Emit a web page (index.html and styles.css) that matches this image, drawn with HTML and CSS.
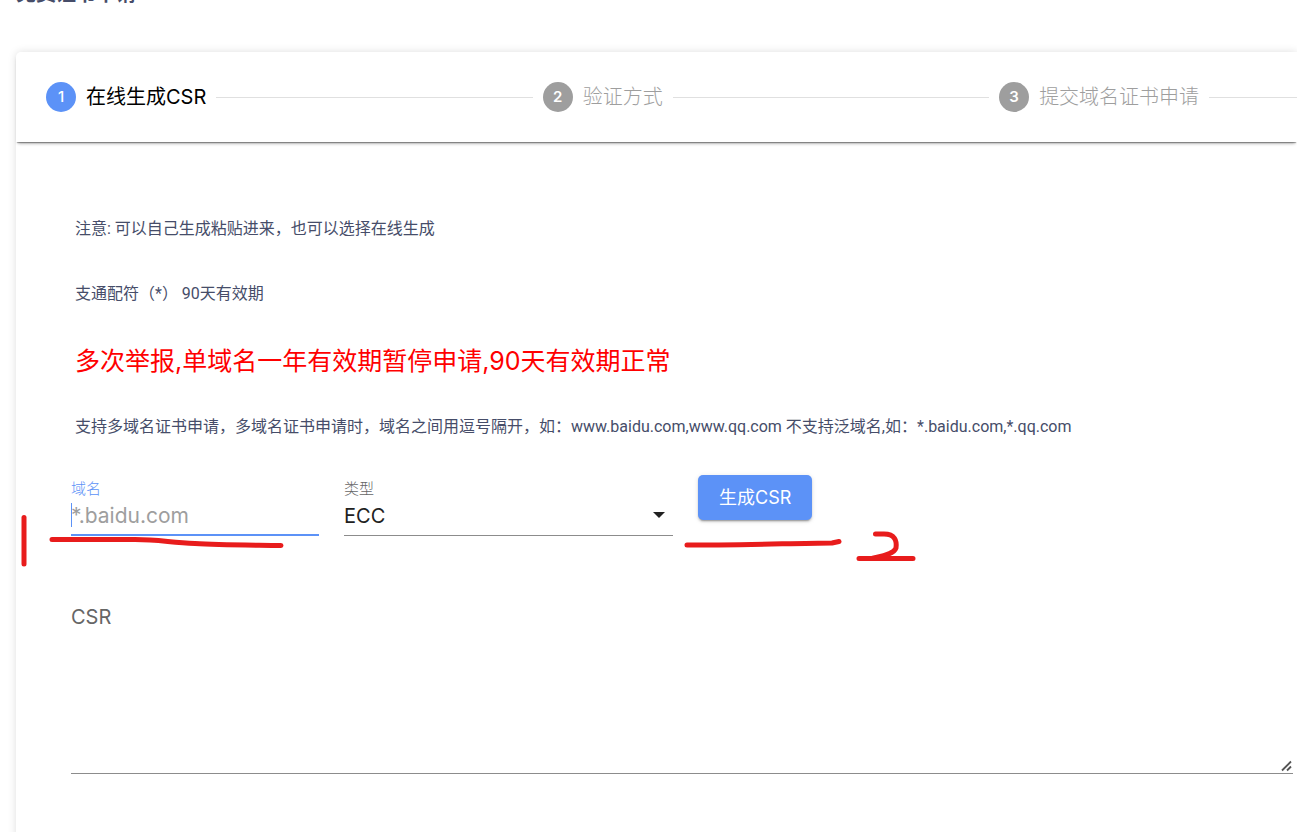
FILE: index.html
```html
<!DOCTYPE html>
<html lang="zh-CN">
<head>
<meta charset="utf-8">
<title>免费证书申请</title>
<link rel="stylesheet" href="styles.css">
</head>
<body>
<main class="page">
  <h1 class="page-title">免费证书申请</h1>
  <section class="card">
    <ol class="stepper">
      <li class="step step-active"><span class="step-num">1</span><span class="step-label">在线生成CSR</span></li>
      <li class="step-line" aria-hidden="true"></li>
      <li class="step"><span class="step-num">2</span><span class="step-label">验证方式</span></li>
      <li class="step-line" aria-hidden="true"></li>
      <li class="step"><span class="step-num">3</span><span class="step-label">提交域名证书申请</span></li>
      <li class="step-line step-line-last" aria-hidden="true"></li>
    </ol>
    <div class="card-body">
      <div class="notes">
        <p class="note">注意: 可以自己生成粘贴进来，也可以选择在线生成</p>
        <p class="note">支通配符（*） 90天有效期</p>
        <p class="warning">多次举报,单域名一年有效期暂停申请,90天有效期正常</p>
        <p class="note">支持多域名证书申请，多域名证书申请时，域名之间用逗号隔开，如：www.baidu.com,www.qq.com 不支持泛域名,如：*.baidu.com,*.qq.com</p>
      </div>
      <form class="form">
        <div class="form-row">
          <div class="field field-focused">
            <label class="field-label" for="domain">域名</label>
            <div class="control">
              <input class="input" id="domain" type="text" placeholder="*.baidu.com">
              <span class="caret"></span>
            </div>
          </div>
          <div class="field">
            <label class="field-label" for="type">类型</label>
            <div class="control">
              <select class="input select" id="type"><option>ECC</option><option>RSA</option></select>
              <svg class="arrow" viewBox="0 0 12 6" aria-hidden="true"><path d="M0 0h12L6 6z" fill="#212121"/></svg>
            </div>
          </div>
          <button class="button" type="button">生成CSR</button>
        </div>
        <div class="csr">
          <label class="csr-label" for="csr">CSR</label>
          <textarea class="csr-input" id="csr"></textarea>
          <svg class="grip" viewBox="0 0 12 12" fill="none" stroke="#555" stroke-width="1.800" aria-hidden="true"><path d="M1 10.500L10 1.500M6 10.500L10 6.500"/></svg>
        </div>
      </form>
    </div>
  </section>
  <svg class="marks" width="930" height="580" viewBox="0 0 930 580" fill="none" stroke="#e81c1c" stroke-width="5" stroke-linecap="round" stroke-linejoin="round" aria-hidden="true">
    <path d="M24 517.500V564"/>
    <path d="M52 539.500H135C159 539.500 170 542.500 195 543.500C218 545 248 545 281 545.500"/>
    <path d="M687 545C733 545 790 543.500 832 543L839 541.500"/>
    <path d="M875.500 534H884C895 534 897 541 896 548C894 554 882 556 872 558.500M859 558.500H913"/>
  </svg>
</main>
</body>
</html>
```
FILE: styles.css
```css
* {
  box-sizing: border-box;
}

body {
  display: flow-root;
  margin: 0;
  overflow: hidden;
  background: #fff;
  color: #464d69;
  font-family: Inter, "Noto Sans CJK SC", sans-serif;
}

.page {
  display: flow-root;
  position: relative;
  padding-left: 16px;
}

.page-title {
  margin: -20px 0 44px;
  font-size: 20px;
  line-height: 28px;
  font-weight: 700;
}

.card {
  min-height: 800px;
  border-radius: 5px 0 0 0;
  background: #fff;
  box-shadow: 0 0 8px rgba(0, 0, 0, 0.13);
}

.stepper {
  display: flex;
  align-items: center;
  gap: 10px;
  height: 90px;
  margin: 0;
  padding: 0 0 0 30px;
  list-style: none;
  border-radius: 5px 0 0 0;
  box-shadow: 0 2px 1px -1px rgba(0, 0, 0, 0.3), 0 3px 3px -2px rgba(0, 0, 0, 0.3), 0 3px 4px -2px rgba(0, 0, 0, 0.2);
}

.step {
  display: flex;
  align-items: center;
  gap: 10px;
  color: #9e9e9e;
  white-space: nowrap;
}

.step-num {
  width: 30px;
  height: 30px;
  border-radius: 50%;
  background: #9e9e9e;
  color: #fff;
  font-size: 15px;
  line-height: 30px;
  font-weight: 600;
  text-align: center;
}

.step-label {
  font-size: 20px;
  line-height: 30px;
  font-weight: 300;
}

.step-active {
  color: #000;
}

.step-active .step-num {
  background: #5c92f7;
  font-weight: 500;
}

.step-active .step-label {
  font-weight: 400;
}

.step-line {
  flex: 18 1 0;
  height: 1px;
  background: #e0e0e0;
}

.step-line-last {
  flex-grow: 5;
}

.card-body {
  padding: 72px 4px 0 55px;
}

.notes {
  padding-left: 4px;
}

.note {
  margin: 0 0 35px;
  font-family: Roboto, "Noto Sans CJK SC", sans-serif;
  font-size: 16px;
  line-height: 30px;
}

.note:last-child {
  margin-bottom: 33px;
}

.warning {
  margin: 0 0 34px;
  color: #f00;
  font-size: 25px;
  line-height: 34px;
}

.form-row {
  display: grid;
  grid-template-columns: 248fr 329fr 595fr;
  gap: 25px;
  align-items: start;
}

.field {
  display: flex;
  flex-direction: column;
  padding-top: 4px;
  color: #666;
}

.field-label {
  font-size: 15px;
  line-height: 20px;
  font-weight: 300;
}

.field-focused .field-label {
  color: #5c92f7;
}

.control {
  position: relative;
}

.input {
  display: block;
  width: 100%;
  height: 37px;
  padding: 0 0 3px;
  border: 0;
  border-bottom: 1px solid #8c8c8c;
  border-radius: 0;
  outline: 0;
  background: transparent;
  color: #212121;
  font-family: inherit;
  font-size: 20px;
}

.input::placeholder {
  color: #9e9e9e;
}

.field-focused .input {
  border-bottom: 2px solid #5c92f7;
  font-size: 21px;
}

.select {
  appearance: none;
}

.caret {
  position: absolute;
  top: 4px;
  left: 0;
  width: 1px;
  height: 24px;
  background: #5c92f7;
}

.arrow {
  position: absolute;
  top: 13px;
  right: 8px;
  width: 12px;
  height: 6px;
  pointer-events: none;
}

.button {
  justify-self: start;
  height: 45px;
  padding: 0 21px 3px;
  border: 0;
  border-radius: 5px;
  background: #5c92f7;
  box-shadow: 0 3px 1px -2px rgba(0, 0, 0, 0.2), 0 2px 2px rgba(0, 0, 0, 0.14), 0 1px 5px rgba(0, 0, 0, 0.12);
  color: #fff;
  font-family: inherit;
  font-size: 18px;
}

.csr {
  position: relative;
  display: flex;
  flex-direction: column;
  margin-top: 66px;
}

.csr-label {
  color: #666;
  font-size: 20px;
  line-height: 30px;
}

.csr-input {
  height: 142px;
  padding: 0;
  border: 0;
  border-bottom: 1px solid #8c8c8c;
  outline: 0;
  background: transparent;
  font: inherit;
  font-size: 20px;
  resize: vertical;
}

.csr-input::-webkit-resizer {
  background: transparent;
}

.grip {
  position: absolute;
  right: 0;
  bottom: 2px;
  width: 12px;
  height: 12px;
  pointer-events: none;
}

.marks {
  position: absolute;
  top: 0;
  left: 0;
  pointer-events: none;
}
```
